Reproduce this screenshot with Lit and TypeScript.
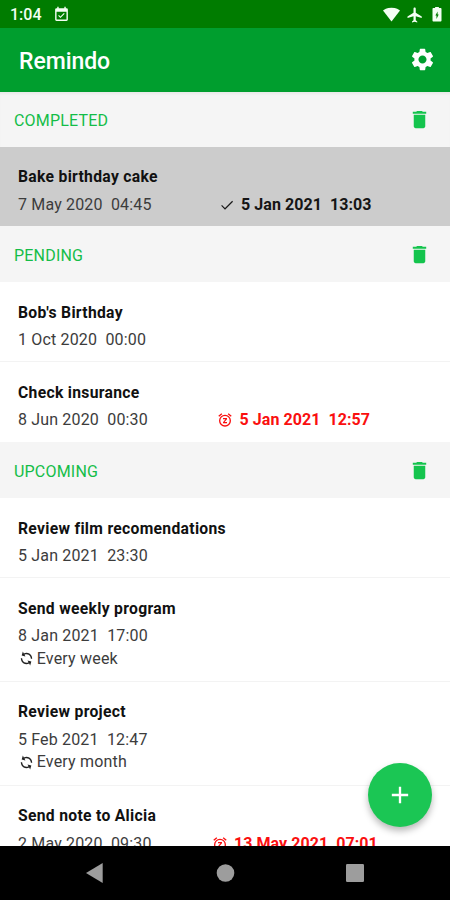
import { LitElement, html, css, svg, nothing } from "lit";
import { customElement, property } from "lit/decorators.js";

type Mark = "done" | "alarm";

interface Reminder {
  title: string;
  date: string;
  time: string;
  repeat?: string;
  mark?: Mark;
  markDate?: string;
  markTime?: string;
}

interface Group {
  name: string;
  items: Reminder[];
}

const groups: Group[] = [
  {
    name: "COMPLETED",
    items: [
      { title: "Bake birthday cake", date: "7 May 2020", time: "04:45", mark: "done", markDate: "5 Jan 2021", markTime: "13:03" },
    ],
  },
  {
    name: "PENDING",
    items: [
      { title: "Bob's Birthday", date: "1 Oct 2020", time: "00:00" },
      { title: "Check insurance", date: "8 Jun 2020", time: "00:30", mark: "alarm", markDate: "5 Jan 2021", markTime: "12:57" },
    ],
  },
  {
    name: "UPCOMING",
    items: [
      { title: "Review film recomendations", date: "5 Jan 2021", time: "23:30" },
      { title: "Send weekly program", date: "8 Jan 2021", time: "17:00", repeat: "Every week" },
      { title: "Review project", date: "5 Feb 2021", time: "12:47", repeat: "Every month" },
      { title: "Send note to Alicia", date: "2 May 2020", time: "09:30", mark: "alarm", markDate: "13 May 2021", markTime: "07:01" },
    ],
  },
];

const paths = {
  event: svg`<path d="M16.5 10.9l-1.1-1.1-4.9 4.9-2.1-2.1-1.1 1.1 3.2 3.2zM19 3h-1V1h-2v2H8V1H6v2H5a2 2 0 0 0-2 2v14a2 2 0 0 0 2 2h14a2 2 0 0 0 2-2V5a2 2 0 0 0-2-2zm0 16H5V8h14z"/>`,
  wifi: svg`<path d="M12 21.8L24 6.500C22.500 5 18.700 2.500 12 2.500S1.500 5 0 6.500z"/>`,
  plane: svg`<path d="M21 16v-2l-8-5V3.500C13 2.670 12.330 2 11.500 2S10 2.670 10 3.500V9l-8 5v2l8-2.500V19l-2 1.500V22l3.500-1 3.500 1v-1.500L13 19v-5.500z"/>`,
  battery: svg`<path fill-rule="evenodd" d="M16.600 4H14.500V2.500h-5V4H7.400C6.600 4 6 4.600 6 5.330v15.330C6 21.400 6.600 22 7.400 22h9.200c.8 0 1.400-.6 1.400-1.330V5.330C18 4.600 17.400 4 16.600 4zM11.300 18.500v-4.500H9.800L12.800 8.500v4h1.500z"/>`,
  gear: svg`<path d="M19.140 12.940c.04-.3.060-.61.060-.94 0-.32-.02-.64-.07-.94l2.030-1.580c.18-.14.230-.41.120-.61l-1.920-3.320c-.12-.22-.37-.29-.59-.22l-2.390.96c-.5-.38-1.030-.7-1.620-.94l-.36-2.540c-.04-.24-.24-.41-.48-.41h-3.840c-.24 0-.43.170-.47.410l-.36 2.540c-.59.240-1.130.570-1.620.940l-2.390-.96c-.22-.08-.47 0-.59.220L2.740 8.870c-.12.210-.08.470.12.610l2.030 1.580c-.05.3-.09.630-.09.940s.02.640.070.940l-2.030 1.580c-.18.140-.23.410-.12.610l1.920 3.320c.12.220.37.290.59.220l2.390-.96c.5.380 1.030.7 1.620.940l.36 2.540c.05.240.24.410.48.410h3.840c.24 0 .44-.17.470-.41l.36-2.540c.59-.24 1.130-.56 1.620-.94l2.390.96c.22.080.47 0 .59-.22l1.920-3.320c.12-.22.070-.47-.12-.61zM12 15.600c-1.980 0-3.600-1.620-3.600-3.600s1.620-3.600 3.600-3.600 3.600 1.620 3.600 3.600-1.620 3.600-3.600 3.600z"/>`,
  trash: svg`<path d="M6 19c0 1.100.9 2 2 2h8c1.100 0 2-.9 2-2V7H6zM19 4h-3.500l-1-1h-5l-1 1H5v2h14z"/>`,
  done: svg`<path d="M9 16.500L4.500 12l-1.200 1.200L9 19 21 7l-1.200-1.200z"/>`,
  alarm: svg`<path d="M22 5.720l-4.600-3.860-1.290 1.530 4.600 3.860zM7.880 3.390L6.600 1.860 2 5.710l1.290 1.530zM12 4a9 9 0 1 0 0 18 9 9 0 0 0 0-18zm0 16a7 7 0 1 1 0-14 7 7 0 0 1 0 14zM9 11h3.630L9 15.200V17h6v-2h-3.630L15 10.800V9H9z"/>`,
  repeat: svg`<path transform="rotate(-28 12 12)" d="M12 4V1L8 5l4 4V6c3.310 0 6 2.690 6 6 0 1.010-.25 1.970-.7 2.800l1.460 1.460A7.930 7.930 0 0 0 20 12c0-4.420-3.580-8-8-8zm0 14c-3.310 0-6-2.690-6-6 0-1.010.25-1.970.7-2.800L5.240 7.740A7.930 7.930 0 0 0 4 12c0 4.420 3.580 8 8 8v3l4-4-4-4z"/>`,
  plus: svg`<path d="M19 13h-6v6h-2v-6H5v-2h6V5h2v6h6z"/>`,
};

@customElement("ui-icon")
export class UiIcon extends LitElement {
  @property() name: keyof typeof paths = "plus";

  static styles = css`
    :host { display: block; flex: none; }
    svg { display: block; width: 100%; height: 100%; fill: currentColor; }
  `;

  render() {
    return html`<svg viewBox="0 0 24 24">${paths[this.name]}</svg>`;
  }
}

@customElement("reminder-row")
export class ReminderRow extends LitElement {
  @property({ attribute: false }) item!: Reminder;

  static styles = css`
    :host { display: block; box-sizing: border-box; padding: 18.600px 18px 0; height: 80px; border-bottom: 1px solid #f3f3f3; background: #fff; }
    :host([tall]) { height: 103.900px; }
    :host([plain]) { border-bottom-color: transparent; }
    :host([done]) { height: 79px; padding-top: 18px; background: #ccc; border: 0; }
    .title { font-weight: 700; font-size: 15.7px; line-height: 24px; color: #111; letter-spacing: 0.3px; }
    .line { display: grid; grid-template-columns: 200px 1fr; align-items: center; height: 24px; margin-top: 3.800px; line-height: 24px; color: #3c3c3c; letter-spacing: 0.16px; }
    .when, .repeat { white-space: pre; }
    .mark { display: flex; align-items: center; font-weight: 700; white-space: pre; color: #151515; letter-spacing: 0.06px; }
    .mark ui-icon { width: 16px; height: 16px; margin: 0 6.500px 0 0.5px; }
    .mark.alarm { color: #fa0f0f; margin-left: -1.500px; }
    .mark.long { margin-left: -7px; }
    .repeat { display: flex; align-items: center; height: 22px; color: #3c3c3c; margin-top: -0.800px; letter-spacing: 0.2px; }
    .repeat ui-icon { width: 17px; height: 17px; margin-right: 1.700px; color: #222; }
  `;

  render() {
    const i = this.item;
    const long = (i.markDate ?? "").length > 10;
    return html`
      <div class="title">${i.title}</div>
      <div class="line">
        <span class="when">${i.date}  ${i.time}</span>
        ${i.mark
          ? html`<span class="mark ${i.mark} ${long ? "long" : ""}"><ui-icon .name=${i.mark}></ui-icon>${i.markDate}  ${i.markTime}</span>`
          : nothing}
      </div>
      ${i.repeat ? html`<div class="repeat"><ui-icon .name=${"repeat"}></ui-icon>${i.repeat}</div>` : nothing}
    `;
  }
}

@customElement("app-root")
export class AppRoot extends LitElement {
  static styles = css`
    :host { display: flex; flex-direction: column; position: relative; width: 450px; height: 900px; overflow: hidden; background: #fff; font: 400 16px/24px Roboto, sans-serif; }
    .status { display: flex; align-items: center; flex: none; height: 28px; padding: 2px 5px 0 10px; box-sizing: border-box; background: #007c00; color: #f3fff3; }
    .clock { width: 43px; font-size: 16px; font-weight: 500; }
    .event { width: 17px; height: 17px; margin: -1px auto 0 0; }
    .wifi { width: 17px; height: 17px; margin: -1px 6px 0 0; }
    .plane { width: 18px; height: 18px; margin: -1px 4px 0 0; }
    .battery { width: 18px; height: 18px; margin: -2px -1px 0 0; }
    .bar { display: flex; align-items: center; justify-content: space-between; flex: none; height: 64px; padding: 3px 14px 0 19px; box-sizing: border-box; background: #009e2e; color: #fff; }
    .name { font-size: 23px; font-weight: 500; letter-spacing: -0.06px; }
    .gear { width: 27px; height: 27px; margin-top: -4px; }
    .list { flex: 1; min-height: 0; overflow: hidden; }
    .group { display: flex; align-items: center; justify-content: space-between; height: 56px; padding: 4px 19px 0 14px; box-sizing: border-box; background: #f5f5f5; color: #14bd48; letter-spacing: 0.2px; }
    .first { height: 55px; padding-top: 2px; box-shadow: inset 0 3px 2px -1px #e9e9e9; }
    .trash { width: 23px; height: 23px; margin-top: -2.500px; color: #14c44d; }
    .fab { position: absolute; left: 368px; top: 763px; width: 64px; height: 64px; border-radius: 50%; display: grid; place-items: center; background: #1bc654; color: #fff; box-shadow: 0 4px 7px rgba(0, 0, 0, 0.28); }
    .plus { width: 28px; height: 28px; }
    .nav { display: grid; grid-template-columns: repeat(3, 129.5px); justify-content: center; align-items: center; justify-items: center; flex: none; height: 54px; background: #000; }
    .nav svg { width: 20px; height: 20px; fill: #9d9d9d; display: block; }
  `;

  render() {
    return html`
      <div class="status">
        <span class="clock">1:04</span>
        <ui-icon class="event" name="event"></ui-icon>
        <ui-icon class="wifi" name="wifi"></ui-icon>
        <ui-icon class="plane" name="plane"></ui-icon>
        <ui-icon class="battery" name="battery"></ui-icon>
      </div>
      <header class="bar">
        <span class="name">Remindo</span>
        <ui-icon class="gear" name="gear"></ui-icon>
      </header>
      <main class="list">
        ${groups.map(
          (g, n) => html`
            <div class="group ${n === 0 ? "first" : ""}">
              <span>${g.name}</span><ui-icon class="trash" name="trash"></ui-icon>
            </div>
            ${g.items.map(
              (i, k) => html`<reminder-row .item=${i} ?done=${i.mark === "done"} ?tall=${!!i.repeat} ?plain=${k === g.items.length - 1}></reminder-row>`
            )}
          `
        )}
      </main>
      <div class="fab"><ui-icon class="plus" name="plus"></ui-icon></div>
      <nav class="nav">
        <svg viewBox="0 0 20 20"><path d="M16.700 0v20L0 10z"/></svg>
        <svg viewBox="0 0 20 20"><circle cx="10.500" cy="10" r="8.800"/></svg>
        <svg viewBox="0 0 20 20"><rect x="1" y="1" width="18" height="18" rx="1.200"/></svg>
      </nav>
    `;
  }
}
